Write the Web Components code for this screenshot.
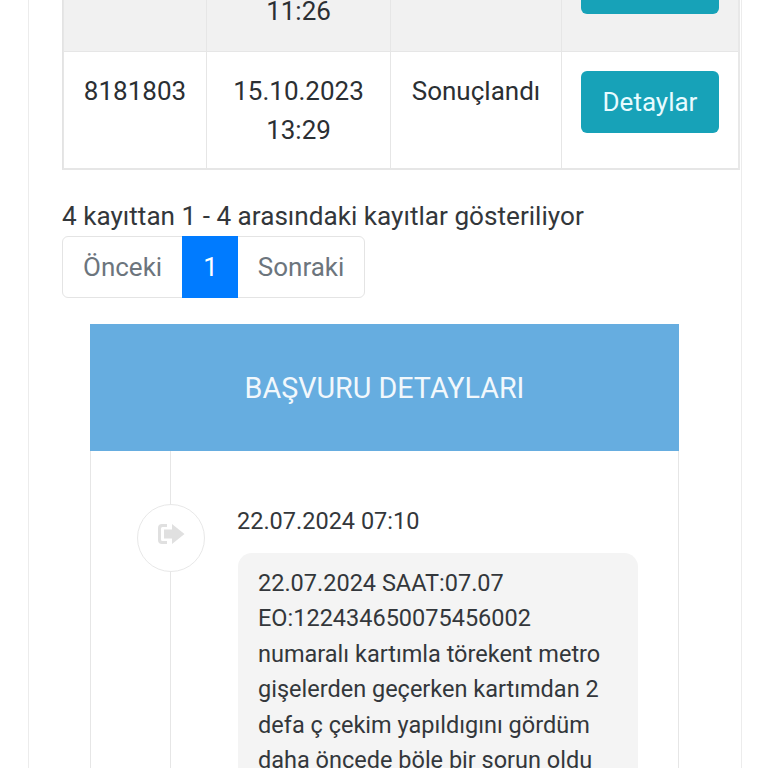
<!DOCTYPE html>
<html lang="tr">
<head>
<meta charset="UTF-8" />
<title>Başvuru</title>
<style>
    html, body { margin: 0; height: 768px; overflow: hidden; background: #fff; }
    body { font-family: Roboto, "Liberation Sans", sans-serif; color: #2b2f33; }
</style>
</head>
<body>
<page-card>
    <result-table>
        <result-row shaded first number="" date="" time="11:26" status=""></result-row>
        <result-row number="8181803" date="15.10.2023" time="13:29" status="Sonuçlandı"></result-row>
    </result-table>
    <table-info>4 kayıttan 1 - 4 arasındaki kayıtlar gösteriliyor</table-info>
    <page-nav></page-nav>
    <detail-panel title-text="BAŞVURU DETAYLARI">
        <time-entry stamp="22.07.2024 07:10">22.07.2024 SAAT:07.07<br>EO:122434650075456002<br>numaralı kartımla törekent metro<br>gişelerden geçerken kartımdan 2<br>defa ç çekim yapıldıgını gördüm<br>daha öncede böle bir sorun oldu</time-entry>
    </detail-panel>
</page-card>

<script>
    const make = (name, html, setup) => {
        customElements.define(name, class extends HTMLElement {
            constructor() {
                super()
                this.attachShadow({ mode: 'open' }).innerHTML = html
            }
            connectedCallback() {
                if (setup) setup(this)
            }
        })
    }

    make('page-card', `
<style>
:host { display: block; box-sizing: border-box; margin: -67px 26px 0 28px; padding: 0 1px 0 33px; height: 900px;
    border-left: 1px solid #ececec; border-right: 1px solid #ececec; }
</style>
<slot></slot>`)

    make('result-table', `
<style>
:host { display: block; border-left: 1px solid #e3e3e3; border-bottom: 2px solid #e6e6e6; border-right: 2px solid #e8e8e8; }
</style>
<slot></slot>`)

    make('result-row', `
<style>
:host { display: grid; grid-template-columns: 143px 184px 171px 176px; font-size: 26px; line-height: 39px; text-align: center; }
:host([shaded]) { background: #f1f1f1; border-bottom: 1px solid #e6e6e6; }
.c { padding: 20px 0 18px; min-height: 78px; border-left: 1px solid #e6e6e6; }
:host([shaded]) .c { padding-bottom: 20px; }
.c:first-child { border-left: 0; }
.btn { display: flex; align-items: center; justify-content: center; width: 138px; height: 62px; margin: -1px auto 0 19px;
    background: #17a2b8; color: #e8fbff; border-radius: 6px; }
</style>
<div class="c" id="n"></div>
<div class="c"><span id="d"></span><br><span id="t"></span></div>
<div class="c" id="s"></div>
<div class="c"><div class="btn">Detaylar</div></div>`, el => {
        const r = el.shadowRoot
        r.getElementById('n').textContent = el.getAttribute('number')
        r.getElementById('d').textContent = el.getAttribute('date')
        r.getElementById('t').textContent = el.getAttribute('time')
        r.getElementById('s').textContent = el.getAttribute('status')
    })

    make('table-info', `
<style>
:host { display: block; margin-top: 27px; font-size: 26.15px; line-height: 39px; color: #33373b; white-space: nowrap; }
</style>
<slot></slot>`)

    make('page-nav', `
<style>
:host { display: inline-flex; height: 62px; font-size: 26px; color: #6c757d; border: 1px solid #e4e4e4; border-radius: 6px;
    box-sizing: border-box; vertical-align: top; }
a { display: flex; align-items: center; padding: 0 20px; }
a.on { background: #007bff; color: #fff; margin: -1px 0; padding: 0 20px 0 21px; }
</style>
<a>Önceki</a><a class="on">1</a><a>Sonraki</a>`)

    make('detail-panel', `
<style>
:host { display: block; width: 589px; margin: 26px 0 0 28px; box-sizing: border-box; }
header { height: 127px; display: flex; align-items: center; justify-content: center; background: #66ade0; color: #f2f8fc; font-size: 28.7px; }
.body { border: 1px solid #e6e6e6; border-top: 0; height: 400px; }
</style>
<header id="h"></header>
<div class="body"><slot></slot></div>`, el => {
        el.shadowRoot.getElementById('h').textContent = el.getAttribute('title-text')
    })

    make('time-entry', `
<style>
:host { display: grid; grid-template-columns: 146px 401px; font-size: 23.5px; height: 100%; color: #33373b; }
.rail { position: relative; }
.rail::before { content: ""; position: absolute; left: 79px; top: 0; bottom: 0; width: 1px; background: #e6e6e6; }
.dot { position: absolute; left: 46px; top: 53px; width: 68px; height: 68px; box-sizing: border-box; border: 1px solid #e8e8e8;
    border-radius: 50%; background: #fff; display: flex; align-items: center; justify-content: center; }
.dot svg { margin-top: -8px; }
.stamp { margin-top: 55px; line-height: 30px; }
.msg { margin: 17px 0 0 1px; padding: 13px 20px 20px; background: #f4f4f4; border-radius: 14px; line-height: 35.4px; white-space: nowrap; }
</style>
<div class="rail"><div class="dot">
    <svg width="28" height="22" viewBox="0 0 28 22" fill="#e0e0e0">
        <path d="M10 1H5a4 4 0 0 0-4 4v12a4 4 0 0 0 4 4h5v-3H5.500A1.500 1.500 0 0 1 4 16.500v-11A1.500 1.500 0 0 1 5.500 4H10z"/>
        <path d="M15 1 27.500 11 15 21v-5.500H7v-9h8z"/>
    </svg>
</div></div>
<div>
    <div class="stamp" id="s"></div>
    <div class="msg"><slot></slot></div>
</div>`, el => {
        el.shadowRoot.getElementById('s').textContent = el.getAttribute('stamp')
    })
</script>
</body>
</html>
